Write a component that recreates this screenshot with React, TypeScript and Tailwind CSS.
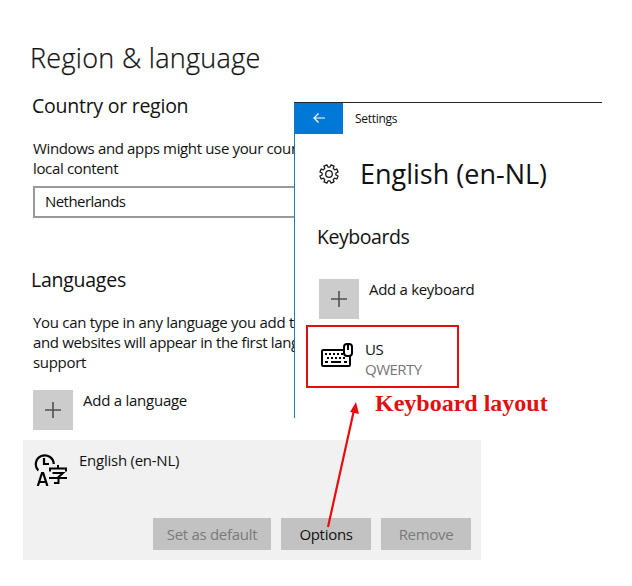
import React from 'react';

const PlusTile: React.FC = () => (
  <div className="w-10 h-10 shrink-0 bg-[#cccccc]">
    <svg viewBox="0 0 40 40" className="w-10 h-10">
      <path d="M12 20h16M20 12v16" stroke="#505050" strokeWidth="1.6" />
    </svg>
  </div>
);

const GearIcon: React.FC = () => (
  <svg viewBox="0 0 20 20" className="w-5 h-5" fill="none" stroke="#1a1a1a" strokeWidth="1.3" strokeLinejoin="round">
    <path d="M11 3.1 12 .9 15 2.2 14.2 4.4 15.6 5.8 17.8 5 19.1 8 16.9 9V11L19.1 12 17.8 15 15.6 14.2 14.2 15.6 15 17.8 12 19.1 11 16.9H9L8 19.1 5 17.8 5.8 15.6 4.4 14.2 2.2 15 .9 12 3.1 11V9L.9 8 2.2 5 4.4 5.8 5.8 4.4 5 2.2 8 .9 9 3.1z" />
    <circle cx="10" cy="10" r="3.3" />
  </svg>
);

const KeyboardIcon: React.FC = () => (
  <svg viewBox="0 0 33 25" className="w-[33px] h-[25px]" fill="none" stroke="#000" strokeWidth="2">
    <rect x="1" y="7" width="28" height="16" rx="1" />
    <path d="M4 11h18M6 15h19" strokeDasharray="2 2" />
    <path d="M4 19h3M10 19h10M23 19h3" />
    <rect x="23" y="1" width="8" height="12" rx="3" fill="#fff" />
    <path d="M27 2v5" />
  </svg>
);

const LanguageIcon: React.FC = () => (
  <svg viewBox="0 0 34 34" className="w-[34px] h-[34px]" fill="none" stroke="#000" strokeWidth="2.2">
    <path d="M4.3 18.6A9 9 0 1 1 19.8 12" />
    <path d="M10 6v6h5" />
    <path d="M3.8 34 8 21h1.2L13.4 34M5.2 30h6.8" />
    <path d="M24 13v3M16 19.5V16.5h16v3M18.5 21H29l-4.5 4v6H20M15 26h18" strokeWidth="2" />
  </svg>
);

const body = 'text-[15px] leading-5 whitespace-nowrap';

const WindowsSettings: React.FC = () => (
  <div className="w-[632px] h-[586px] pt-10 bg-white">
    <div className="pl-[33px]">
      <h1 className="-ml-[3px] text-[27px] leading-9 font-light tracking-[0.3px] [-webkit-text-stroke:0.25px_#111]">
        Region &amp; language
      </h1>
      <h2 className="-ml-px mt-4 text-[19.5px] leading-7 tracking-[-0.25px]">Country or region</h2>
      <p className={`mt-[18px] ${body} tracking-[-0.35px]`}>
        Windows and apps might use your country
        <br />
        local content
      </p>
      <div className={`mt-2 w-[300px] h-8 pl-[10px] pb-[2px] border-2 border-[#999999] flex items-center ${body} tracking-[-0.55px]`}>
        Netherlands
      </div>
      <h2 className="-ml-[2px] mt-12 text-[19.5px] leading-7 tracking-[-0.25px]">Languages</h2>
      <p className={`mt-[18px] ${body} tracking-[-0.3px]`}>
        You can type in any language you add to
        <br />
        <span className="tracking-[-0.35px]">and websites will appear in the first language</span>
        <br />
        support
      </p>
      <div className="mt-[18px] flex gap-[10px]">
        <PlusTile />
        <span className={`${body} tracking-[-0.25px]`}>Add a language</span>
      </div>
    </div>

    <div className="ml-[23px] mt-[10px] w-[458px] h-[120px] p-[10px] bg-[#f1f1f1] flex flex-col justify-between">
      <div className="flex gap-[10px]">
        <div className="w-9 flex justify-center pt-[2px]">
          <LanguageIcon />
        </div>
        <span className={`${body} tracking-[-0.25px]`}>English (en-NL)</span>
      </div>
      <div className={`flex justify-end gap-[10px] ${body} tracking-[-0.3px]`}>
        <button className="w-[118px] h-8 bg-[#c2c2c2] text-[#7a7a7a]">Set as default</button>
        <button className="w-[90px] h-8 bg-[#c2c2c2]">Options</button>
        <button className="w-[90px] h-8 bg-[#c2c2c2] text-[#7a7a7a]">Remove</button>
      </div>
    </div>
  </div>
);

// Second window, opened over the language page
const KeyboardWindow: React.FC = () => (
  <div className="absolute left-[294px] top-[102px] w-[308px] h-[316px] border-t border-[#222831] bg-white">
    <div className="h-[315px] border-l border-[#1f77bd]">
      <div className="flex items-center h-[31px]">
        <div className="w-12 h-[31px] bg-[#0078d7] flex items-center justify-center">
          <svg viewBox="0 0 12 10" className="w-3 h-[10px] -mt-[2px]" fill="none" stroke="#fff" strokeWidth="1.2">
            <path d="M12 5H1M5.5.5 1 5l4.5 4.5" />
          </svg>
        </div>
        <span className="ml-3 text-xs tracking-[-0.3px]">Settings</span>
      </div>
      <div className="mt-[22px] pl-6 flex items-center gap-[21px]">
        <GearIcon />
        <h1 className="text-[27px] leading-9 whitespace-nowrap">English (en-NL)</h1>
      </div>
      <h2 className="mt-[31px] ml-[22px] text-[19.5px] leading-7 tracking-[-0.45px]">Keyboards</h2>
      <div className="mt-7 ml-6 flex gap-[10px]">
        <PlusTile />
        <span className={`${body} tracking-[-0.3px]`}>Add a keyboard</span>
      </div>
      <div className="mt-[6px] ml-[11px] w-[153px] h-[63px] pl-[13px] border-2 border-[#e01010] flex">
        <div className="pt-4">
          <KeyboardIcon />
        </div>
        <div className={`ml-[11px] pt-3 ${body} tracking-[-0.5px]`}>
          <div>US</div>
          <div className="text-[#767676]">QWERTY</div>
        </div>
      </div>
    </div>
  </div>
);

const App: React.FC = () => (
  <div className="relative w-[632px] h-[586px] overflow-hidden font-['Open_Sans','Noto_Sans',sans-serif] text-[#111]">
    <WindowsSettings />
    <KeyboardWindow />
    <div className="absolute left-[375px] top-[389px] font-['Liberation_Serif',serif] font-bold text-[24px] leading-7 whitespace-nowrap text-[#e01010]">
      Keyboard layout
    </div>
    <svg viewBox="0 0 40 130" className="absolute left-[324px] top-[400px] w-10 h-[130px]">
      <path d="M4 127 30 10" stroke="#e90c0c" strokeWidth="2.2" />
      <path d="M32 2 35 14 26 12z" fill="#e90c0c" />
    </svg>
  </div>
);

export default App;
